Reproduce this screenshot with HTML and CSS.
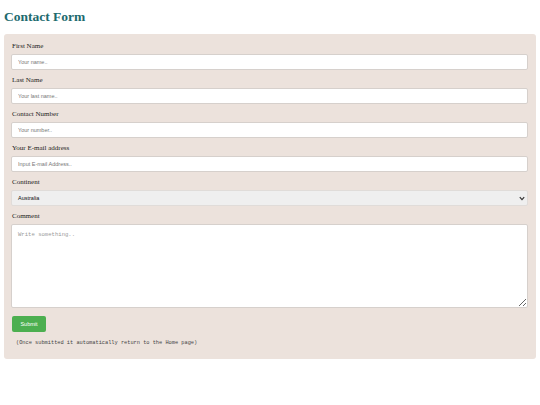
FILE: index.html
```html
<!DOCTYPE html>
<html>
<head>
<meta charset="utf-8">
<link rel="stylesheet" href="styles.css">
</head>
<body>
<h2 class="title">Contact Form</h2>
<div class="card">
  <form class="form">
    <label class="lbl">First Name</label>
    <input class="field" type="text" placeholder="Your name..">
    <label class="lbl">Last Name</label>
    <input class="field" type="text" placeholder="Your last name..">
    <label class="lbl">Contact Number</label>
    <input class="field" type="text" placeholder="Your number..">
    <label class="lbl">Your E-mail address</label>
    <input class="field" type="text" placeholder="Input E-mail Address..">
    <label class="lbl">Continent</label>
    <div class="select">
      <span>Australia</span>
      <svg class="chev" width="6" height="5" viewBox="0 0 6 5"><path d="M0.8 1.2 L3 3.6 L5.2 1.2" fill="none" stroke="#333" stroke-width="1.2"/></svg>
    </div>
    <label class="lbl">Comment</label>
    <textarea class="area" placeholder="Write something.."></textarea>
    <button class="submit" type="button">Submit</button>
    <p class="note">(Once submitted it automatically return to the Home page)</p>
  </form>
</div>
</body>
</html>
```
FILE: styles.css
```css
html, body { margin: 0; padding: 0; background: #fff; }
body { padding: 0 4px; font-family: "Liberation Serif", serif; }
.title {
  margin: 0; padding-top: 8px; height: 26px;
  font-size: 13.5px; font-weight: bold; color: #216a6e;
  font-family: "Liberation Serif", serif; line-height: 18px;
}
.card {
  background: #ece2dc; border-radius: 3px;
  padding: 7px 8px 13px 7px; margin-top: 0;
}
.form { display: flex; flex-direction: column; margin: 0; }
.lbl { font-size: 7px; line-height: 9px; color: #222; font-weight: normal; margin: 1px 0 3px 1px; }
.field {
  box-sizing: border-box; height: 16px; width: 100%;
  border: 1px solid #d6d0cc; border-radius: 2px; background: #fff;
  font-family: "Liberation Sans", sans-serif; font-size: 5.5px;
  padding: 0 6px; margin: 0 0 5px 0; outline: none;
}
.field::placeholder { color: #777; }
.select {
  box-sizing: border-box; height: 16px; width: 100%;
  border: 1px solid #e0dcd9; border-radius: 2px; background: #efefef;
  font-family: "Liberation Sans", sans-serif; font-size: 5.5px; color: #111;
  padding: 0 2px 0 6px; margin: 0 0 5px 0;
  display: flex; align-items: center; justify-content: space-between;
}
.area {
  box-sizing: border-box; height: 84px; width: 100%;
  border: 1px solid #d6d0cc; border-radius: 2px; background: #fff;
  font-family: "Liberation Mono", monospace; font-size: 5.6px;
  padding: 6px; margin: 0; resize: vertical; outline: none;
}
.area::placeholder { color: #999; }
.submit {
  align-self: flex-start; margin: 8px 0 0 1px;
  width: 34px; height: 16px; border: none; border-radius: 2px;
  background: #4caf50; color: #fff;
  font-family: "Liberation Sans", sans-serif; font-size: 5.5px; padding: 0;
}
.note {
  margin: 8px 0 0 5px; font-family: "Liberation Mono", monospace;
  font-size: 5.3px; color: #444;
}
```
